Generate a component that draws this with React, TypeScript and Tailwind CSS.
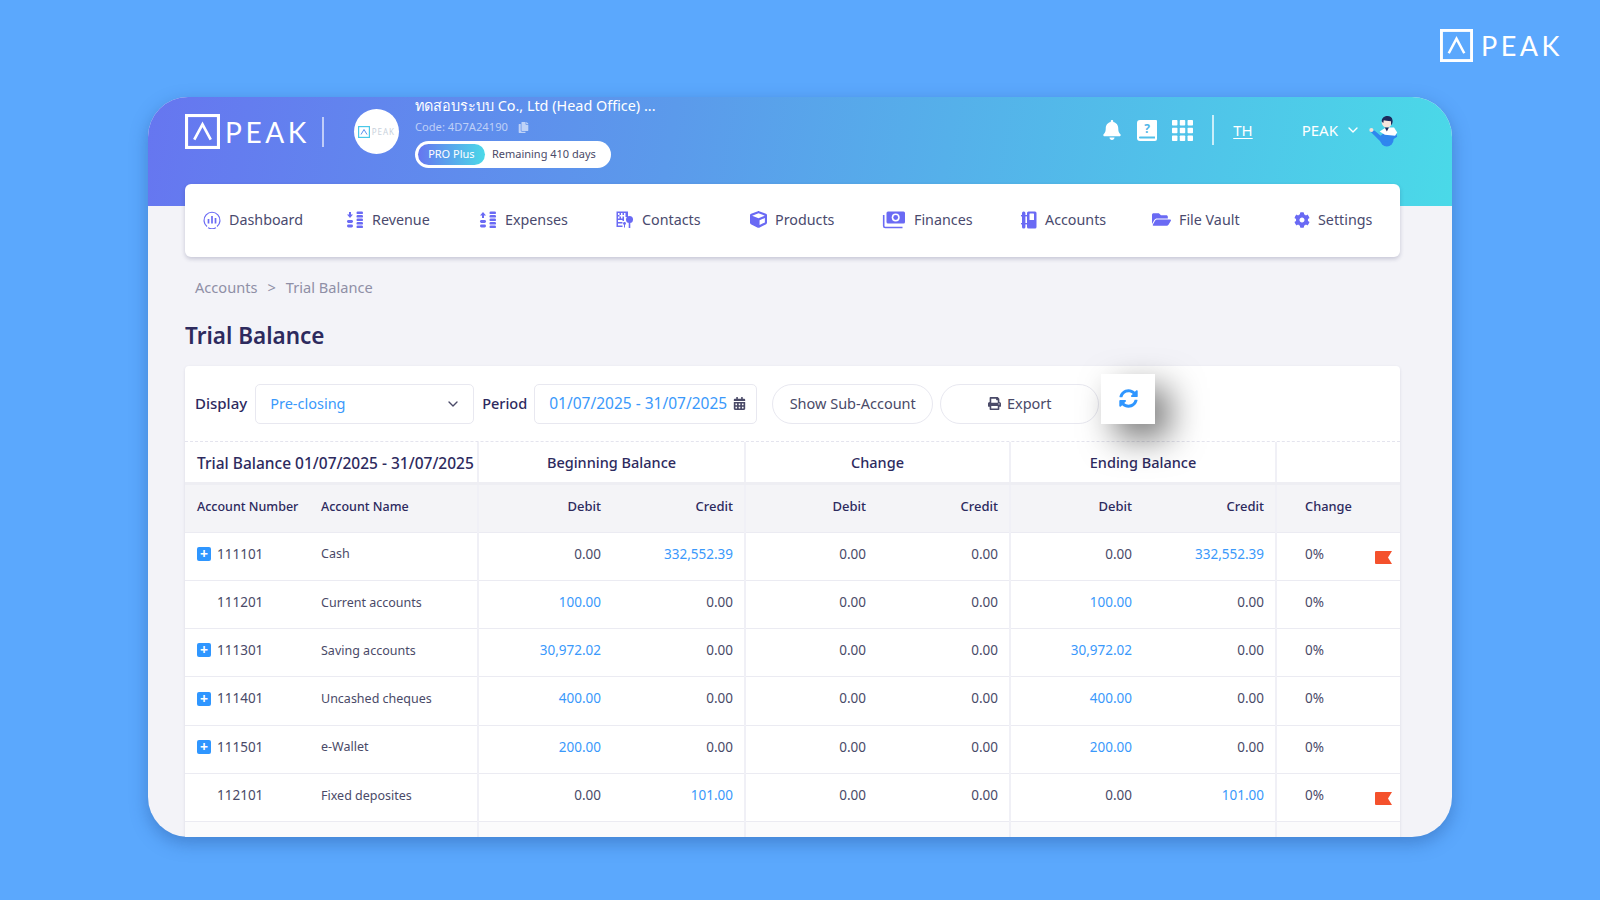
import React from "react";
import { FaBell, FaCalendarAlt, FaCog, FaCopy, FaCube, FaFolderOpen, FaPrint, FaSyncAlt } from "react-icons/fa";
import { FiChevronDown } from "react-icons/fi";

function Logo({ box, text, gap, track }: { box: number; text: string; gap: string; track: string }) {
  return (
    <div className={`flex items-center ${gap}`}>
      <svg width={box} height={box} viewBox="0 0 34 34" fill="none">
        <rect x="1.5" y="1.5" width="31" height="31" stroke="#fff" strokeWidth="3" />
        <path d="M9 25 L17 10 L25 25" stroke="#fff" strokeWidth="2.6" />
      </svg>
      <span className={`font-normal text-white ${text} ${track} leading-none [font-family:'Lato',sans-serif]`}>PEAK</span>
    </div>
  );
}

function Coins({ up }: { up: boolean }) {
  const c = "#6a6af4";
  return (
    <svg width="18" height="18" viewBox="0 0 18 18" fill={c}>
      <path d={up ? "M4 1 L7 4.5 H5 V7 H3 V4.5 H1 Z" : "M3 1 H5 V3.5 H7 L4 7 L1 3.5 H3 Z"} />
      <rect x="1" y="9" width="6" height="3" rx="1.4" />
      <rect x="1" y="13.5" width="6" height="3" rx="1.4" />
      {[0.5, 4, 7.5, 11, 14.5].map((y) => (
        <rect key={y} x="10.5" y={y} width="6.5" height="2.6" rx="1.2" />
      ))}
    </svg>
  );
}

const navIcons: Record<string, React.ReactNode> = {
  Dashboard: (
    <svg width="18" height="18" viewBox="0 0 18 18" fill="none" stroke="#6a6af4">
      <path d="M4 15.5 A8 8 0 1 1 14 15.5" strokeWidth="1.2" />
      <path d="M5 16.8 A9 9 0 0 0 13 16.8" strokeWidth="1.2" />
      <path d="M5.5 8 V12.5 M9 5 V12.5 M12.5 7 V12.5" strokeWidth="1.7" />
    </svg>
  ),
  Revenue: <Coins up={false} />,
  Expenses: <Coins up={true} />,
  Contacts: (
    <svg width="18" height="18" viewBox="0 0 18 18" fill="#6a6af4">
      <path d="M0.5 0.5 H12 V6 H9.5 V2 H8 V4 H6.5 V2 H5 V4 H3.5 V2 H2 V4 H3.5 V5.5 H2 V7.5 H3.5 V5.5 H5 V7.5 H6.5 V5.5 H8 V10 H6.5 V9 H2 V11 H6.5 V12.5 H2 V14.5 H6.5 V16 H0.5 Z" />
      <circle cx="13.5" cy="8.5" r="3.5" />
      <rect x="12.7" y="11" width="1.6" height="6" />
      <circle cx="8.5" cy="12.5" r="1.4" />
      <rect x="8" y="13" width="1" height="3.5" />
    </svg>
  ),
  Products: <FaCube className="text-[17px] text-[#6a6af4]" />,
  Finances: (
    <svg width="24" height="18" viewBox="0 0 23 18" fill="none">
      <rect x="4" y="0.5" width="18.5" height="12" rx="1.5" fill="#6a6af4" />
      <circle cx="13.2" cy="6.5" r="4" fill="#fff" />
      <circle cx="13.2" cy="6.5" r="2.4" fill="#6a6af4" />
      <path d="M1.2 4 V15 A1.5 1.5 0 0 0 2.7 16.5 H20" stroke="#6a6af4" strokeWidth="1.6" />
    </svg>
  ),
  Accounts: (
    <svg width="16" height="18" viewBox="0 0 16 18" fill="#6a6af4">
      <rect x="6" y="0.5" width="9.5" height="17" rx="1.5" />
      <rect x="8.5" y="2.5" width="4.5" height="6.5" rx="0.6" fill="#fff" />
      <rect x="1" y="0.5" width="3.4" height="17" rx="1.5" />
      <rect x="0" y="4" width="6" height="1.4" />
      <rect x="0" y="12" width="6" height="1.4" />
    </svg>
  ),
  "File Vault": <FaFolderOpen className="text-[19px] text-[#6a6af4]" />,
  Settings: <FaCog className="text-[16px] text-[#6a6af4]" />,
};

const navItems: { n: string; w: string }[] = [
  { n: "Dashboard", w: "w-[143px]" },
  { n: "Revenue", w: "w-[133px]" },
  { n: "Expenses", w: "w-[137px]" },
  { n: "Contacts", w: "w-[134px]" },
  { n: "Products", w: "w-[132px]" },
  { n: "Finances", w: "w-[139px]" },
  { n: "Accounts", w: "w-[131px]" },
  { n: "File Vault", w: "w-[142px]" },
  { n: "Settings", w: "w-[80px]" },
];

type Row = { no: string; name: string; expand: boolean; d: string; c: string; flag: boolean };
const rows: Row[] = [
  { no: "111101", name: "Cash", expand: true, d: "0.00", c: "332,552.39", flag: true },
  { no: "111201", name: "Current accounts", expand: false, d: "100.00", c: "0.00", flag: false },
  { no: "111301", name: "Saving accounts", expand: true, d: "30,972.02", c: "0.00", flag: false },
  { no: "111401", name: "Uncashed cheques", expand: true, d: "400.00", c: "0.00", flag: false },
  { no: "111501", name: "e-Wallet", expand: true, d: "200.00", c: "0.00", flag: false },
  { no: "112101", name: "Fixed deposites", expand: false, d: "0.00", c: "101.00", flag: true },
];

function Amt({ v, end }: { v: string; end?: boolean }) {
  const blue = v !== "0.00";
  return (
    <td className={`pb-[5px] text-right ${blue ? "text-[#3a99fb]" : "text-[#4a4a68]"} ${end ? "border-r-2 border-r-[#f0f0f6] pr-[11px]" : "pr-[12px]"}`}>{v}</td>
  );
}

function Avatar() {
  return (
    <svg width="33" height="33" viewBox="0 0 29.5 32">
      <circle cx="18" cy="25" r="6.5" fill="#2f86ee" />
      <path d="M2 17 L6 16 L12 21 L17 17 L26 15 L28 22 L22 26 L12 27 Z" fill="#2f86ee" />
      <path d="M11 17 L17 13 L25 13 L28 18 L26 21 L16 20 Z" fill="#fff" />
      <circle cx="18" cy="8" r="5" fill="#f7e6dc" />
      <path d="M13 7 C13 1 23 0 23.5 6 C24 8 23 10 22 11 L22 7 C19 7 16 6 15 6 L14.5 9 Z" fill="#1d2a5c" />
      <circle cx="3" cy="15.5" r="2" fill="#f4e2d8" />
      <path d="M16 13 L18 17 L20 13 Z" fill="#1d2a5c" />
    </svg>
  );
}

export default function App() {
  return (
    <div className="h-[900px] w-[1600px] overflow-hidden bg-[#5ba8fd] text-[#4a4a68] [font-family:'Noto_Sans','Noto_Sans_CJK_SC',sans-serif]">
      <div className="flex h-[97px] items-start justify-end pr-[37px] pt-[29px]">
        <Logo box={33} text="text-[27px]" gap="gap-[8px]" track="tracking-[3.5px]" />
      </div>
      <div className="mx-[148px] h-[740px] overflow-hidden rounded-[40px] bg-[#f3f3f8] shadow-[0_6px_18px_rgba(20,60,130,0.35)]">
        <div className="flex h-[109px] bg-[linear-gradient(100deg,#6676f0_0%,#5b9aeb_40%,#4ad9e8_100%)] pl-[37px] pr-[52px] text-white">
          <div className="mt-[17px] flex h-[35px] items-center">
            <Logo box={35} text="text-[28px]" gap="gap-[5px]" track="tracking-[3.6px]" />
            <div className="ml-[12px] h-[30px] w-[2px] bg-white/60" />
          </div>
          <div className="ml-[30px] mt-[12px] flex h-[45px] w-[45px] items-center justify-center rounded-full bg-white">
            <svg width="12" height="12" viewBox="0 0 12 12" fill="none">
              <rect x="0.6" y="0.6" width="10.8" height="10.8" stroke="#4ac8e8" strokeWidth="1.2" />
              <path d="M3 8.5 L6 3.5 L9 8.5" stroke="#5a8ff0" strokeWidth="1" />
            </svg>
            <span className="ml-[2px] text-[8px] tracking-[1px] text-[#c9d2dc]">PEAK</span>
          </div>
          <div className="ml-[16px] flex flex-col">
            <div className="mt-[1px] h-[16px] text-[14.4px] leading-[16px]">ทดสอบระบบ Co., Ltd (Head Office) ...</div>
            <div className="mt-[6px] flex h-[14px] items-center text-[11.2px] text-white/60">
              Code: 4D7A24190
              <FaCopy className="ml-[10px] text-[11px]" />
            </div>
            <div className="mt-[7px] flex h-[27px] w-[196px] items-center rounded-full bg-white pl-[3px] text-[11px]">
              <span className="flex h-[21px] w-[67px] items-center justify-center rounded-full bg-[linear-gradient(90deg,#6676f0,#4ad9e8)] text-white">PRO Plus</span>
              <span className="ml-[7px] text-[#4a4a68]">Remaining 410 days</span>
            </div>
          </div>
          <div className="ml-auto mt-[18px] flex h-[30px] items-center">
            <FaBell className="text-[20px]" />
            <svg className="ml-[15px]" width="20" height="21" viewBox="0 0 20 21">
              <path fillRule="evenodd" fill="#fff" d="M3 0 H19 A1 1 0 0 1 20 1 V19 A2 2 0 0 1 18 21 H3 A3 3 0 0 1 0 18 V3 A3 3 0 0 1 3 0 Z M3 16.5 A1 1 0 0 0 3 18.5 H18 V16.5 Z" />
              <text x="10" y="12.5" textAnchor="middle" fontSize="12" fontWeight="700" fill="#4fb6e8">?</text>
            </svg>
            <svg className="ml-[15px]" width="21" height="21" viewBox="0 0 21.6 21.6" fill="#fff">
              {[0, 8, 16].flatMap((y) => [0, 8, 16].map((x) => <rect key={`${x}-${y}`} x={x} y={y} width="5.6" height="5.6" rx="0.8" />))}
            </svg>
            <div className="ml-[19px] h-[30px] w-[2px] bg-white/70" />
            <span className="ml-[19px] text-[15px] underline underline-offset-2">TH</span>
            <span className="ml-[49px] text-[15px]">PEAK</span>
            <FiChevronDown className="ml-[7px] text-[16px]" />
            <div className="ml-[6px]"><Avatar /></div>
          </div>
        </div>

        <div className="pl-[37px] pr-[52px]">
          <nav className="relative -mt-[22px] flex h-[73px] items-center rounded-[6px] bg-white pb-[2px] pl-[18px] text-[14.3px] text-[#4a4a6e] shadow-[0_2px_4px_rgba(40,40,90,0.22)]">
            {navItems.map(({ n, w }) => (
              <div key={n} className={`flex shrink-0 items-center gap-[8px] ${w}`}>
                {navIcons[n]}
                <span>{n}</span>
              </div>
            ))}
          </nav>
          <div className="ml-[10px] mt-[20px] flex h-[22px] items-center text-[14.6px] text-[#8f8fa6]">
            <span>Accounts</span>
            <span className="mx-[10px]">&gt;</span>
            <span>Trial Balance</span>
          </div>
          <h1 className="mt-[23px] h-[28px] text-[22.5px] font-semibold leading-[28px] text-[#2d2a5e]">Trial Balance</h1>

          <div className="mt-[16px] rounded-[4px] bg-white shadow-[0_1px_3px_rgba(40,40,90,0.12)]">
            <div className="flex h-[76px] items-center border-b border-dashed border-b-[#e4e4ee] pl-[10px] text-[14.5px]">
              <span className="text-[15px] font-medium text-[#2d2a5e]">Display</span>
              <div className="ml-[8px] flex h-[40px] w-[219px] items-center justify-between rounded-[5px] border border-[#e8e8f0] pl-[14px] pr-[12px] text-[#3a99fb]">
                Pre-closing
                <FiChevronDown className="text-[16px] text-[#4a4a68]" />
              </div>
              <span className="ml-[8px] font-medium text-[#2d2a5e]">Period</span>
              <div className="ml-[7px] flex h-[40px] w-[223px] items-center justify-between rounded-[5px] border border-[#e8e8f0] pl-[14px] pr-[10px] text-[15.5px] text-[#3a99fb]">
                01/07/2025 - 31/07/2025
                <FaCalendarAlt className="text-[13px] text-[#4a4a68]" />
              </div>
              <div className="ml-[15px] flex h-[40px] w-[161px] items-center justify-center rounded-full border border-[#e8e8f0]">Show Sub-Account</div>
              <div className="ml-[7px] flex h-[40px] w-[159px] items-center justify-center gap-[6px] rounded-full border border-[#e8e8f0]">
                <FaPrint className="text-[13px]" />
                Export
              </div>
              <div className="relative z-10 mb-[10px] ml-[2px] flex h-[50px] w-[54px] items-center justify-center bg-white shadow-[14px_14px_34px_rgba(0,0,0,0.55)]">
                <FaSyncAlt className="text-[19px] text-[#2f96ff]" />
              </div>
            </div>
            <table className="w-[1215px] table-fixed text-[13.5px]">
              <colgroup>
                <col className="w-[136px]" />
                <col className="w-[157px]" />
                <col className="w-[135px]" />
                <col className="w-[132px]" />
                <col className="w-[133px]" />
                <col className="w-[132px]" />
                <col className="w-[134px]" />
                <col className="w-[132px]" />
                <col className="w-[124px]" />
              </colgroup>
              <thead>
                <tr className="h-[41px] text-[14.5px] text-[#2d2a5e]">
                  <th colSpan={2} className="whitespace-nowrap border-r-2 border-r-[#f0f0f6] pl-[12px] pt-[3px] text-left text-[15.5px] font-medium">Trial Balance 01/07/2025 - 31/07/2025</th>
                  <th colSpan={2} className="border-r-2 border-r-[#f0f0f6] pt-[3px] font-medium">Beginning Balance</th>
                  <th colSpan={2} className="border-r-2 border-r-[#f0f0f6] pt-[3px] font-medium">Change</th>
                  <th colSpan={2} className="border-r-2 border-r-[#f0f0f6] pt-[3px] font-medium">Ending Balance</th>
                  <th />
                </tr>
                <tr className="h-[49px] border-b border-t-[3px] border-b-[#ebebf2] border-t-[#eeeef3] bg-[#f4f4f7] text-[13px] text-[#2d2a5e]">
                  <th className="whitespace-nowrap pb-[2px] pl-[12px] text-left text-[12.5px] font-medium">Account Number</th>
                  <th className="border-r-2 border-r-[#f0f0f6] pb-[2px] text-left text-[12.5px] font-medium">Account Name</th>
                  <th className="pb-[2px] pr-[12px] text-right font-medium">Debit</th>
                  <th className="border-r-2 border-r-[#f0f0f6] pb-[2px] pr-[11px] text-right font-medium">Credit</th>
                  <th className="pb-[2px] pr-[12px] text-right font-medium">Debit</th>
                  <th className="border-r-2 border-r-[#f0f0f6] pb-[2px] pr-[11px] text-right font-medium">Credit</th>
                  <th className="pb-[2px] pr-[12px] text-right font-medium">Debit</th>
                  <th className="border-r-2 border-r-[#f0f0f6] pb-[2px] pr-[11px] text-right font-medium">Credit</th>
                  <th className="pb-[2px] pl-[28px] text-left text-[12.8px] font-medium">Change</th>
                </tr>
              </thead>
              <tbody>
                {rows.map((r) => (
                  <tr key={r.no} className="h-[48.3px] border-b border-b-[#ebebf2]">
                    <td className="pb-[5px] pl-[12px]">
                      <div className="flex items-center">
                        {r.expand ? (
                          <span className="mr-[6px] flex h-[14px] w-[14px] items-center justify-center rounded-[2px] bg-[#2f96ff] text-[14px] font-bold leading-none text-white">+</span>
                        ) : (
                          <span className="mr-[6px] w-[14px]" />
                        )}
                        {r.no}
                      </div>
                    </td>
                    <td className="border-r-2 border-r-[#f0f0f6] pb-[3px] text-[12.5px]">{r.name}</td>
                    <Amt v={r.d} />
                    <Amt v={r.c} end />
                    <Amt v="0.00" />
                    <Amt v="0.00" end />
                    <Amt v={r.d} />
                    <Amt v={r.c} end />
                    <td className="pl-[28px]">
                      <div className="flex items-center justify-between pr-[8px]">
                        <span className="pb-[5px]">0%</span>
                        {r.flag && (
                          <svg width="17" height="13" viewBox="0 0 17 13" className="mt-[2px]">
                            <path d="M1 0 H17 L13 6.5 L17 13 H1 A1 1 0 0 1 0 12 V1 A1 1 0 0 1 1 0 Z" fill="#f4512c" />
                          </svg>
                        )}
                      </div>
                    </td>
                  </tr>
                ))}
                <tr className="h-[48px] bg-[#fbfbfc]">
                  <td />
                  <td className="border-r-2 border-r-[#f0f0f6]" />
                  <td />
                  <td className="border-r-2 border-r-[#f0f0f6]" />
                  <td />
                  <td className="border-r-2 border-r-[#f0f0f6]" />
                  <td />
                  <td className="border-r-2 border-r-[#f0f0f6]" />
                  <td />
                </tr>
              </tbody>
            </table>
          </div>
        </div>
      </div>
    </div>
  );
}
